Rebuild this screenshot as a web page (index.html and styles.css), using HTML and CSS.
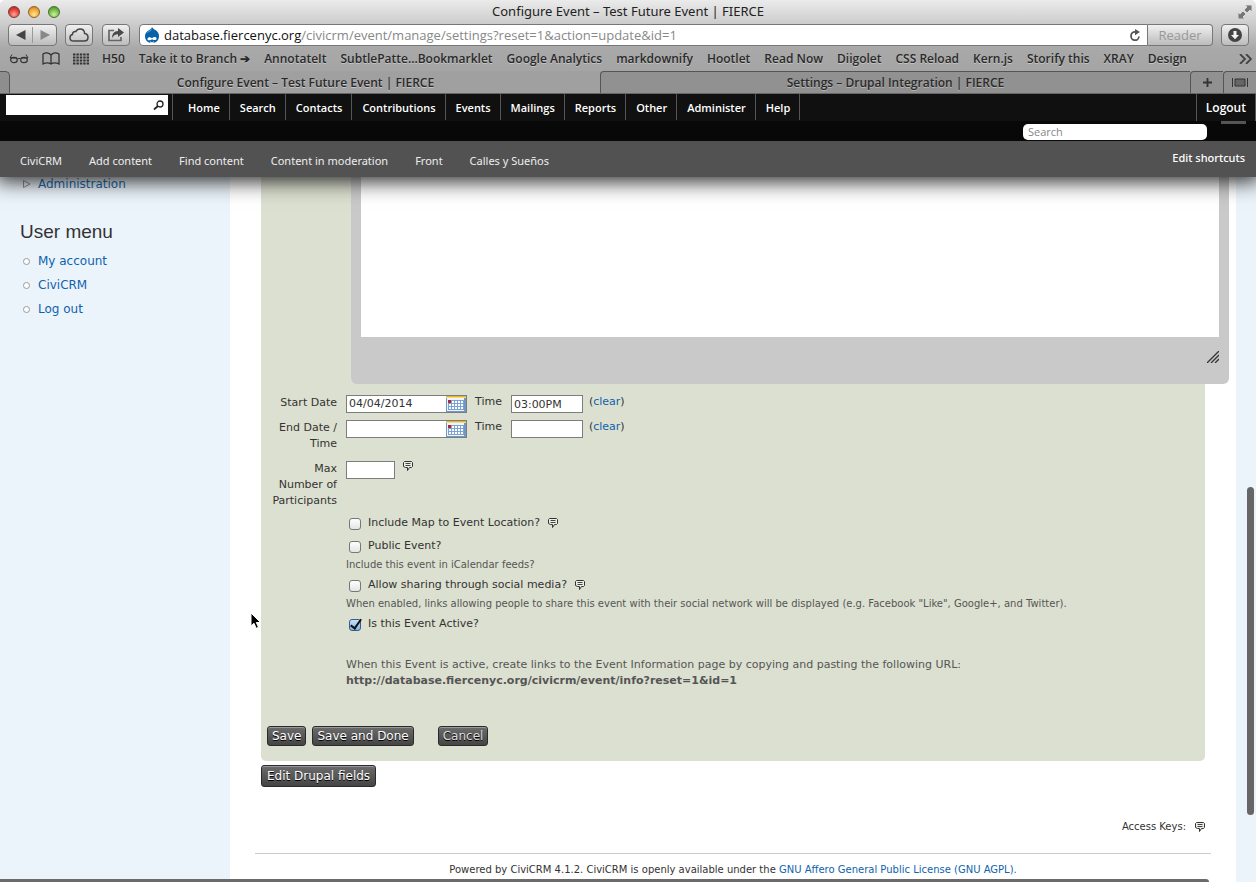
FILE: index.html
```html
<!DOCTYPE html>
<html lang="en">
<head>
<meta charset="utf-8">
<title>Configure Event – Test Future Event | FIERCE</title>
<link rel="stylesheet" href="styles.css">
</head>
<body>
<svg class="defs" aria-hidden="true">
  <symbol id="note" viewBox="0 0 10 10"><path d="M1.500.5h7l1 1v4l-1 1h-2l-2 3v-3h-2l-2-1v-4z" fill="#eeeee4" stroke="#333"/><path d="M2.500 2.500h5M2.500 4.500h5" stroke="#444"/></symbol>
  <symbol id="calendar" viewBox="0 0 20 16"><path d="M0 0h20v16H0z" fill="#6f97c8"/><path d="M1 2h17v13H1z" fill="#eef4fb"/><path d="M0 0h20v2H0z" fill="#eab52c"/><path d="M0 1.500h20" stroke="#f7dc7c"/><path d="M2 4h16v10H2z" fill="#7aa3d4"/><path d="M3 6h14M3 9h14M3 12h14" stroke="#fff" stroke-width="2" stroke-dasharray="2 1"/><path d="M2 4h3v3H2z" fill="#b02634"/></symbol>
</svg>

<header class="browser">
  <div class="titlebar">
    <div class="lights"><span class="light red"></span><span class="light amber"></span><span class="light green"></span></div>
    <div class="window-title">Configure Event – Test Future Event | FIERCE</div>
    <svg class="expand" viewBox="0 0 14 14" width="14" height="14"><path d="M7 0h7v7l-2-2-3 3-3-3 3-3zM0 7l2 2 3-3 3 3-3 3 2 2H0z" fill="#777" stroke="#d8d8d8" stroke-width="1"/></svg>
  </div>
  <div class="toolbar">
    <div class="nav-pair">
      <button class="nav-btn" aria-label="Back"><svg width="10" height="10" viewBox="0 0 10 10"><path d="M9.500 0v10L0 5z" fill="#444"/></svg></button>
      <button class="nav-btn" aria-label="Forward"><svg width="10" height="10" viewBox="0 0 10 10"><path d="M.5 0v10L10 5z" fill="#888"/></svg></button>
    </div>
    <button class="tool-btn" aria-label="iCloud tabs"><svg width="20" height="14" viewBox="0 0 20 14"><path d="M4.500 13C2.500 13 1 11.600 1 9.700 1 8 2.200 6.900 3.500 6.600 3.300 4.500 5 3.200 6.800 3.600 7.800 1.700 9.300 1 11 1c2.800 0 4.500 2 4.600 4.400C17.700 5.700 19 7.200 19 9.200c0 2.300-1.500 3.800-3.600 3.800z" fill="none" stroke="#444" stroke-width="1.500"/></svg></button>
    <button class="tool-btn" aria-label="Share"><svg width="18" height="14" viewBox="0 0 18 14"><path d="M7 2.500H2v10h12V9" fill="none" stroke="#666" stroke-width="1.700"/><path d="M11 0l6 4.500L11 9V6.200C8 6.200 6.500 7.500 5 10c0-4 2-7 6-7z" fill="#4a4a4a"/></svg></button>
    <div class="address">
      <svg width="16" height="17" viewBox="0 0 16 17"><path d="M8 0c1 2 3 2.500 4.500 3.800C14.300 5.300 15 7 15 9.200 15 13.400 12 16 8 16s-7-2.600-7-6.800C1 6.300 2.500 4.700 4.500 3.400 6.200 2.300 7.500 2 8 0z" fill="#0a62a8"/><path d="M3.500 11.500c1-2 3-1.500 4.500-.3 1.500-1.500 4-2 4.500 0 .5 2-2 2.600-4.500 1-1.500 1.500-5 1.800-4.500-.7z" fill="#fff"/><path d="M6 15c1.500.700 3 .600 4-.2" stroke="#fff" fill="none"/><path d="M3.500 5.500C5 4 6.500 4.200 7.500 2.500" stroke="#68b0e4" fill="none"/></svg>
      <span class="url"><b>database.fiercenyc.org</b>/civicrm/event/manage/settings?reset=1&amp;action=update&amp;id=1</span>
      <svg class="reload" width="12" height="13" viewBox="0 0 12 13"><path d="M7 2.800H6A4 4.200 0 1 0 10 7.500" fill="none" stroke="#555" stroke-width="1.800"/><path d="M6 0l5 3-5 3.300z" fill="#555"/></svg>
    </div>
    <button class="reader">Reader</button>
    <button class="tool-btn download" aria-label="Downloads"><svg width="14" height="14" viewBox="0 0 14 14"><circle cx="7" cy="7" r="7" fill="#444"/><path d="M5.500 3h3v4H11l-4 4.200L3 7h2.500z" fill="#f4f4f4"/></svg></button>
  </div>
  <nav class="bookmarks" aria-label="Bookmarks">
    <svg width="20" height="11" viewBox="0 0 20 11"><path d="M1 5l2-3.500M19 5l-2-3.500M1 5h7M12 5h7M8.500 6q1.500-1.500 3 0" fill="none" stroke="#333"/><ellipse cx="5" cy="7" rx="3.300" ry="2.700" fill="none" stroke="#333" stroke-width="1.200"/><ellipse cx="15" cy="7" rx="3.300" ry="2.700" fill="none" stroke="#333" stroke-width="1.200"/></svg>
    <svg width="18" height="13" viewBox="0 0 18 13"><path d="M9 3C7 .5 3.500.5 1 2v10c2.500-1.200 6-1.200 8 0 2-1.200 5.500-1.200 8 0V2C14.500.5 11 .5 9 3zv9" fill="none" stroke="#333" stroke-width="1.300"/></svg>
    <svg width="16" height="12" viewBox="0 0 16 12"><path d="M0 1.500h16M0 4.500h16M0 7.500h16M0 10.500h16" stroke="#333" stroke-width="2" stroke-dasharray="2.400 1"/></svg>
    <a href="#">H50</a><a href="#">Take it to Branch ➔</a><a href="#">AnnotateIt</a><a href="#">SubtlePatte…Bookmarklet</a><a href="#">Google Analytics</a><a href="#">markdownify</a><a href="#">Hootlet</a><a href="#">Read Now</a><a href="#">Diigolet</a><a href="#">CSS Reload</a><a href="#">Kern.js</a><a href="#">Storify this</a><a href="#">XRAY</a><a href="#">Design</a>
    <svg class="more" width="13" height="10" viewBox="0 0 13 10"><path d="M1 0l5 5-5 5M7 0l5 5-5 5" fill="none" stroke="#444" stroke-width="1.800"/></svg>
  </nav>
  <div class="tabs">
    <span class="tab-stub"></span>
    <button class="tab active">Configure Event – Test Future Event | FIERCE</button>
    <button class="tab">Settings – Drupal Integration | FIERCE</button>
    <button class="tab small" aria-label="New tab"><svg width="9" height="9" viewBox="0 0 9 9"><path d="M4.500 0v9M0 4.500h9" stroke="#333" stroke-width="1.800"/></svg></button>
    <button class="tab small last" aria-label="Show all tabs"><svg width="16" height="9" viewBox="0 0 16 9"><path d="M.5 0v9M15.500 0v9" stroke="#333"/><path d="M3 1h10v7H3z" fill="#666" stroke="#333"/></svg></button>
  </div>
</header>

<div class="admin">
  <nav class="crm-menu" aria-label="CiviCRM">
    <div class="quick"><input type="text" aria-label="Quick search"><svg width="11" height="10" viewBox="0 0 11 10"><circle cx="7" cy="4" r="3" fill="none" stroke="#222" stroke-width="1.300"/><path d="M5 6L1 9.500" stroke="#222" stroke-width="1.800"/></svg></div>
    <ul>
      <li><a href="#">Home</a></li><li><a href="#">Search</a></li><li><a href="#">Contacts</a></li><li><a href="#">Contributions</a></li><li><a href="#">Events</a></li><li><a href="#">Mailings</a></li><li><a href="#">Reports</a></li><li><a href="#">Other</a></li><li><a href="#">Administer</a></li><li><a href="#">Help</a></li>
    </ul>
    <a class="logout" href="#">Logout</a>
  </nav>
  <div class="search-strip"><input type="search" placeholder="Search" aria-label="Search"><span class="drawer"></span></div>
  <nav class="shortcuts" aria-label="Shortcuts">
    <a href="#">CiviCRM</a><a href="#">Add content</a><a href="#">Find content</a><a href="#">Content in moderation</a><a href="#">Front</a><a href="#">Calles y Sueños</a>
    <a class="edit" href="#">Edit shortcuts</a>
  </nav>
</div>

<div class="page">
  <aside class="sidebar">
    <ul class="menu"><li class="closed"><svg width="8" height="8" viewBox="0 0 8 8"><path d="M.5.5L7 4 .5 7.500z" fill="none" stroke="#888"/></svg><a href="#">Administration</a></li></ul>
    <h2>User menu</h2>
    <ul class="menu links"><li><a href="#">My account</a></li><li><a href="#">CiviCRM</a></li><li><a href="#">Log out</a></li></ul>
  </aside>

  <main class="main">
    <form class="panel">
      <div class="editor">
        <textarea aria-label="Complete description"></textarea>
        <svg width="12" height="12" viewBox="0 0 12 12"><path d="M0 12L12 0M4 12l8-8M8 12l4-4" stroke="#333" stroke-width="1.300"/></svg>
      </div>
      <div class="fields">
        <label class="name" for="start">Start Date</label>
        <div class="row">
          <span class="date"><input id="start" type="text" value="04/04/2014"><svg width="20" height="16"><use href="#calendar"/></svg></span>
          <label class="time-label" for="st">Time</label><input class="time" id="st" type="text" value="03:00PM"><span class="clear">(<a href="#">clear</a>)</span>
        </div>
        <label class="name" for="end">End Date / Time</label>
        <div class="row">
          <span class="date"><input id="end" type="text"><svg width="20" height="16"><use href="#calendar"/></svg></span>
          <label class="time-label" for="et">Time</label><input class="time" id="et" type="text"><span class="clear">(<a href="#">clear</a>)</span>
        </div>
        <label class="name" for="max">Max Number of Participants</label>
        <div class="row"><input class="max" id="max" type="text"><svg class="note" width="10" height="10"><use href="#note"/></svg></div>
      </div>
      <div class="options">
        <div class="check first"><input type="checkbox" id="map"><label for="map">Include Map to Event Location?</label><svg class="note" width="10" height="10"><use href="#note"/></svg></div>
        <div class="check"><input type="checkbox" id="public"><label for="public">Public Event?</label></div>
        <p class="hint">Include this event in iCalendar feeds?</p>
        <div class="check"><input type="checkbox" id="share"><label for="share">Allow sharing through social media?</label><svg class="note" width="10" height="10"><use href="#note"/></svg></div>
        <p class="hint">When enabled, links allowing people to share this event with their social network will be displayed (e.g. Facebook "Like", Google+, and Twitter).</p>
        <div class="check"><input type="checkbox" id="active" checked><label for="active">Is this Event Active?</label></div>
        <p class="info">When this Event is active, create links to the Event Information page by copying and pasting the following URL:<br><strong>http://database.fiercenyc.org/civicrm/event/info?reset=1&amp;id=1</strong></p>
      </div>
      <div class="buttons">
        <button type="button" class="btn">Save</button><button type="button" class="btn">Save and Done</button><button type="button" class="btn cancel">Cancel</button>
      </div>
    </form>
    <button type="button" class="btn large">Edit Drupal fields</button>
    <div class="keys">Access Keys: <svg class="note" width="10" height="10"><use href="#note"/></svg></div>
    <footer>Powered by CiviCRM 4.1.2. CiviCRM is openly available under the <a href="#">GNU Affero General Public License (GNU AGPL).</a></footer>
  </main>
  <div class="gutter"></div>
</div>
<div class="scroll-v"></div>
<div class="scroll-h"></div>
<svg class="cursor" width="12" height="18" viewBox="0 0 12 18"><path d="M1 1v13l3-2.700 2.200 5 2.300-1L6.300 10.500H10.500z" fill="#000" stroke="#fff"/></svg>
</body>
</html>
```
FILE: styles.css
```css
*, *::before, *::after { box-sizing: border-box; }
body {
  margin: 0;
  height: 100vh;
  overflow: hidden;
  display: flex;
  flex-direction: column;
  position: relative;
  background: #fff;
  color: #333;
  font: 11px/16px "DejaVu Sans", Verdana, sans-serif;
}
ul { list-style: none; margin: 0; padding: 0; }
p { margin: 0; }
a { text-decoration: none; color: #0f62ad; }
button, input, textarea { font: inherit; color: inherit; margin: 0; }
button { padding: 0; border: 0; background: none; white-space: nowrap; }
svg { display: block; flex: none; }
.defs { position: absolute; width: 0; height: 0; }

/* Browser window */
.browser {
  flex: none;
  position: relative;
  z-index: 3;
  font-family: "Open Sans", "Lucida Grande", sans-serif;
  color: #222;
  background: linear-gradient(#ebebeb 0, #cccccc 24px, #a9a9a9 48px, #a0a0a0 100%);
  border-radius: 5px 5px 0 0;
}
.titlebar { display: grid; grid-template-columns: 80px 1fr 80px; align-items: center; height: 24px; }
.lights { display: flex; gap: 8px; padding-left: 8px; }
.light { width: 12px; height: 12px; border-radius: 50%; border: 1px solid #7a3a35; }
.red { background: radial-gradient(circle at 50% 75%, #ffa49a, #df3b34 60%, #b32520); }
.amber { background: radial-gradient(circle at 50% 75%, #ffe58c, #eda63a 60%, #b9711b); border-color: #8d6220; }
.green { background: radial-gradient(circle at 50% 75%, #ccf29a, #70b548 60%, #437f29); border-color: #456f2d; }
.window-title { text-align: center; font: 13px/20px "Noto Sans", sans-serif; padding-bottom: 2px; }
.expand { justify-self: end; margin-right: 4px; }
.toolbar { display: flex; height: 22px; padding: 0 7px 0 8px; }
.nav-pair, .tool-btn, .reader {
  display: flex;
  align-items: center;
  justify-content: center;
  border: 1px solid #777;
  border-radius: 4px;
  background: linear-gradient(#f0f0f0, #bcbcbc);
}
.nav-pair { width: 49px; margin-right: 8px; }
.nav-btn { flex: 1; display: flex; justify-content: center; padding: 3px 0; }
.nav-btn + .nav-btn { border-left: 1px solid #999; }
.tool-btn { width: 28px; margin-right: 9px; }
.address {
  flex: 1;
  display: flex;
  align-items: center;
  gap: 4px;
  padding: 0 6px 0 4px;
  background: #fff;
  border: 1px solid #777;
  border-radius: 4px 0 0 4px;
}
.url { flex: 1; font-size: 13px; line-height: 18px; color: #888; }
.url b { font-weight: 400; color: #111; }
.reader { width: 65px; border-left: 0; border-radius: 0 4px 4px 0; color: #999; font-size: 13px; margin-right: 8px; }
.download { margin-right: 0; }
.bookmarks { display: flex; align-items: center; height: 25px; padding: 0 4px 0 9px; }
.bookmarks svg { margin-right: 13px; }
.bookmarks a { margin-right: 14px; color: #2a2a2a; font-size: 12px; font-weight: 600; white-space: nowrap; text-shadow: 0 1px 0 #c4c4c4; }
.bookmarks .more { margin: 0 0 0 auto; }
.tabs { display: flex; height: 23px; background: #a0a0a0; border-bottom: 1px solid #666; }
.tab-stub { width: 10px; background: #8e8e8e; border: solid #555; border-width: 1px 1px 0 0; border-radius: 0 5px 0 0; }
.tab {
  flex: 1;
  font-size: 12px;
  line-height: 20px;
  font-weight: 600;
  color: #2a2a2a;
  background: #919191;
  border-top: 1px solid #555;
  border-left: 1px solid #555;
  border-radius: 4px 0 0 0;
  text-shadow: 0 1px 0 #b4b4b4;
}
.active { background: none; border-color: transparent; text-shadow: 0 1px 0 #c4c4c4; }
.small { flex: none; width: 33px; display: flex; align-items: center; justify-content: center; }

/* Site toolbars */
.admin { flex: none; position: relative; z-index: 2; box-shadow: 0 0 20px 4px #222; background: #080808; }
.crm-menu { display: flex; height: 27px; background: #101010; font: 600 11px/27px "Open Sans", sans-serif; }
.crm-menu a { color: #fff; display: block; padding: 0 9px 0 10px; }
.quick { display: flex; align-items: center; align-self: flex-start; width: 162px; height: 20px; margin: 1px 4px 0 6px; padding-right: 4px; background: #fff; }
.quick input { flex: 1; min-width: 0; border: 0; background: none; height: 20px; }
.crm-menu ul { display: flex; flex: 1; padding-bottom: 1px; }
.crm-menu li { border-right: 1px solid #555; }
.crm-menu li:first-child { border-left: 1px solid #555; padding-left: 5px; }
.crm-menu .logout { border: solid #555; border-width: 0 1px; font-size: 12px; padding: 0 9px; }
.search-strip { display: flex; justify-content: flex-end; height: 20px; padding: 3px 10px 0 0; }
.search-strip input { width: 184px; height: 16px; border: 0; border-radius: 5px; padding: 0 5px; background: #fff; appearance: none; font: 11px/16px "Open Sans", sans-serif; }
.search-strip ::placeholder { color: #888; }
.drawer { width: 25px; height: 3px; margin: -3px 0 0 14px; background: #555; }
.shortcuts { display: flex; gap: 27px; height: 36px; padding: 0 11px 0 20px; background: #525252; font: 11px/40px "Noto Sans", sans-serif; }
.shortcuts a { color: #eee; }
.shortcuts .edit { margin-left: auto; line-height: 34px; color: #fff; font-weight: 500; }

/* Page */
.page { flex: 1; min-height: 0; display: grid; grid-template-columns: 230px minmax(0, 1fr) 20px; overflow: hidden; }
.sidebar, .gutter { background: #ebf4fb; }
.sidebar { padding: 0 20px; }
.sidebar h2 { margin: 27px 0 3px; font: 19px/28px "Liberation Sans", Arial, sans-serif; }
.menu { font-size: 12px; line-height: 24px; }
.menu li { display: flex; align-items: center; gap: 8px; padding-left: 3px; }
.menu .closed { line-height: 14px; gap: 7px; }
.links li::before { content: ""; width: 7px; height: 7px; border: 1px solid #999; border-radius: 50%; background: #fff; }

.main { padding: 0 31px; }
.panel { background: #dce0d0; border-radius: 0 0 5px 5px; padding-bottom: 15px; }
.editor { margin: 0 -24px 11px 90px; padding: 0 10px; height: 207px; background: #c9c9ca; border-radius: 0 0 6px 6px; }
.editor textarea { display: block; width: 100%; height: 160px; border: 0; resize: none; background: #fff; }
.editor svg { margin: 14px 0 0 auto; }
.fields { display: grid; grid-template-columns: 76px 1fr; column-gap: 9px; row-gap: 7px; grid-template-rows: 18px minmax(34px, auto) auto; }
.name { text-align: right; padding-left: 8px; }
.row { display: flex; align-items: flex-start; }
.row input { height: 18px; border: 1px solid #7d7d7d; background: #fff; padding: 0 2px; }
.date { display: flex; align-items: center; width: 121px; height: 18px; border: 1px solid #7d7d7d; background: #fff; }
.row .date input { flex: 1; min-width: 0; height: 16px; border: 0; }
.time-label { margin: -1px 9px 0 8px; }
.row .time { width: 72px; }
.clear { margin: -1px 0 0 6px; }
.row .max { width: 49px; margin-right: 8px; }
.options { padding: 4px 0 0 85px; }
.check { display: flex; align-items: center; height: 20px; }
.check.first { margin-bottom: 3px; }
.check label { margin: 0 8px 0 7px; }
.check input {
  appearance: none;
  width: 12px;
  height: 12px;
  margin: 2px 0 0 3px;
  border: 1px solid #777;
  border-radius: 3px;
  background: linear-gradient(#fff, #e4e4e4);
}
.check input:checked { background: linear-gradient(#c8e0f8, #7db4ec); border-color: #3d5a86; position: relative; }
.check input:checked::after { content: ""; position: absolute; left: 3px; top: -3px; width: 6px; height: 12px; border: solid #111; border-width: 0 2px 2px 0; transform: rotate(35deg); }
.hint { font-size: 10px; line-height: 17px; padding-bottom: 2px; color: #555; }
.info { margin-top: 23px; color: #555; }
.buttons { display: flex; padding: 37px 6px 0; }
.btn {
  height: 20px;
  padding: 0 4px;
  margin-right: 6px;
  font-size: 12px;
  line-height: 16px;
  color: #fff;
  border: 1px solid #2a2a2a;
  border-radius: 3px;
  background: linear-gradient(#6c6c6c, #444);
  box-shadow: inset 0 1px 0 #999;
  text-shadow: 0 1px 0 #000;
}
.cancel { margin-left: 18px; color: #ddd; }
.large { display: block; height: 22px; padding: 0 5px; margin-top: 4px; }
.keys { display: flex; justify-content: flex-end; align-items: center; gap: 9px; margin-top: 32px; font-size: 10px; }
footer { margin: 18px -6px 0; padding-top: 8px; border-top: 1px solid #ccc; text-align: center; font-size: 10px; }

/* Overlays */
.scroll-v { position: absolute; right: 2px; top: 487px; width: 7px; height: 328px; border-radius: 4px; background: #666; z-index: 3; }
.scroll-h { position: absolute; left: 0; right: 47px; bottom: 0; height: 3px; border-radius: 0 4px 0 0; background: #6b6b6b; z-index: 3; }
.cursor { position: absolute; left: 250px; top: 612px; z-index: 3; }
```
